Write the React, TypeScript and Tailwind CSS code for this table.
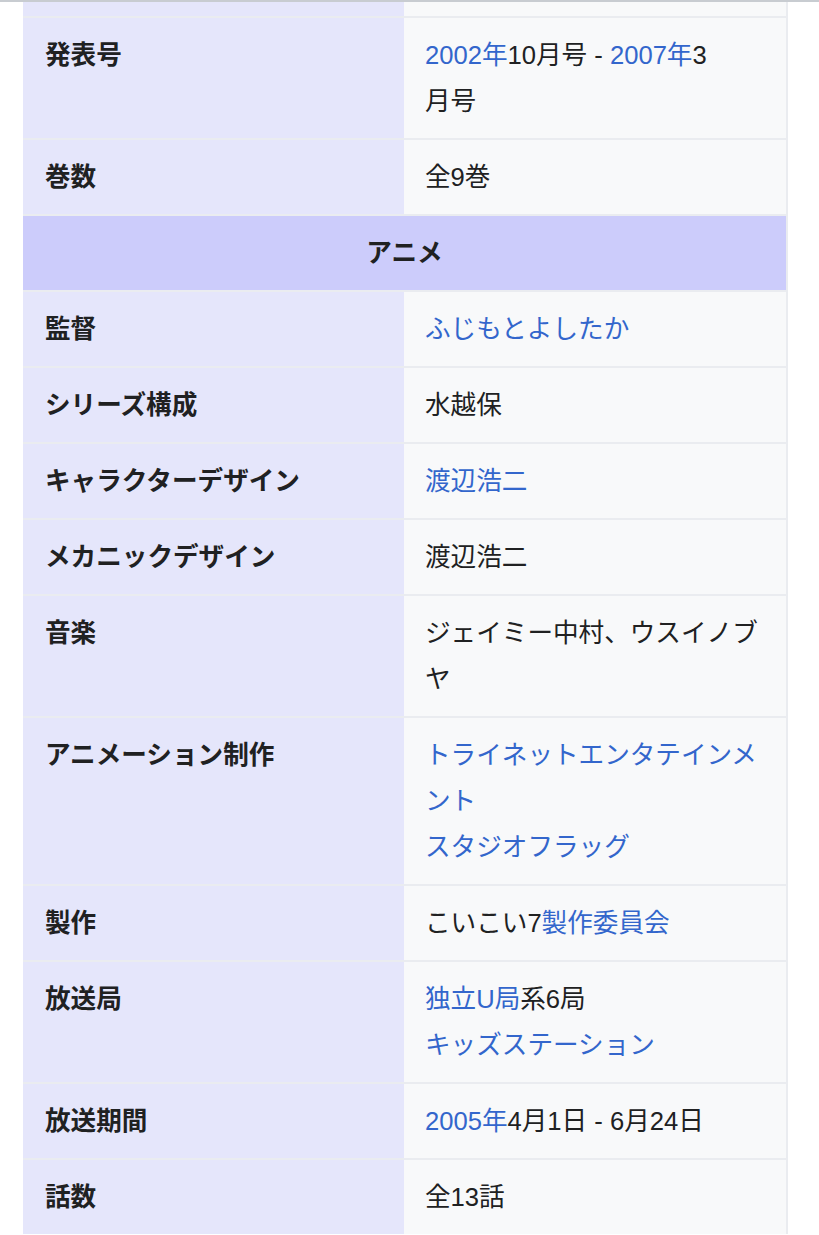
import React from "react";

type Part = { t: string; link?: boolean };
type Row = { label: string; lines: Part[][] };

const L = (t: string): Part => ({ t, link: true });
const T = (t: string): Part => ({ t });

const mangaRows: Row[] = [
  {
    label: "発表号",
    lines: [
      [L("2002年"), T("10月号 - "), L("2007年"), T("3")],
      [T("月号")],
    ],
  },
  { label: "巻数", lines: [[T("全9巻")]] },
];

const animeRows: Row[] = [
  { label: "監督", lines: [[L("ふじもとよしたか")]] },
  { label: "シリーズ構成", lines: [[T("水越保")]] },
  { label: "キャラクターデザイン", lines: [[L("渡辺浩二")]] },
  { label: "メカニックデザイン", lines: [[T("渡辺浩二")]] },
  { label: "音楽", lines: [[T("ジェイミー中村、ウスイノブヤ")]] },
  {
    label: "アニメーション制作",
    lines: [[L("トライネットエンタテインメント")], [L("スタジオフラッグ")]],
  },
  { label: "製作", lines: [[T("こいこい7"), L("製作委員会")]] },
  {
    label: "放送局",
    lines: [[L("独立U局"), T("系6局")], [L("キッズステーション")]],
  },
  {
    label: "放送期間",
    lines: [[L("2005年"), T("4月1日 - 6月24日")]],
  },
  { label: "話数", lines: [[T("全13話")]] },
];

function InfoRow({ row }: { row: Row }) {
  return (
    <div className="grid grid-cols-[381px_382px] border-t-2 border-[#eaecf0]">
      <div className="bg-[#e5e6fb] px-[22px] py-[14px] font-bold">
        {row.label}
      </div>
      <div className="bg-[#f8f9fa] pl-[21px] pr-[20px] py-[14px]">
        {row.lines.map((line, i) => (
          <div key={i}>
            {line.map((p, j) =>
              p.link ? (
                <a key={j} className="text-[#3366cc]">
                  {p.t}
                </a>
              ) : (
                <span key={j}>{p.t}</span>
              )
            )}
          </div>
        ))}
      </div>
    </div>
  );
}

export default function App() {
  return (
    <div
      className="min-h-[1235px] bg-white text-[#202122] text-[25.6px] leading-[46px]"
      style={{
        fontFamily:
          '"Liberation Sans", "Noto Sans CJK JP", sans-serif',
      }}
    >
      <div className="h-[2px] bg-[#c8ccd1]" />
      <div className="ml-[23px] w-[765px] border-r-2 border-[#eaecf0]">
        <div className="grid grid-cols-[381px_382px] h-[14px]">
          <div className="bg-[#e5e6fb]" />
          <div className="bg-[#f8f9fa]" />
        </div>
        {mangaRows.map((r) => (
          <InfoRow key={r.label} row={r} />
        ))}
        <div className="border-t-2 border-[#eaecf0] bg-[#ccccfb] py-[14px] text-center font-bold">
          アニメ
        </div>
        {animeRows.map((r) => (
          <InfoRow key={r.label} row={r} />
        ))}
      </div>
    </div>
  );
}
